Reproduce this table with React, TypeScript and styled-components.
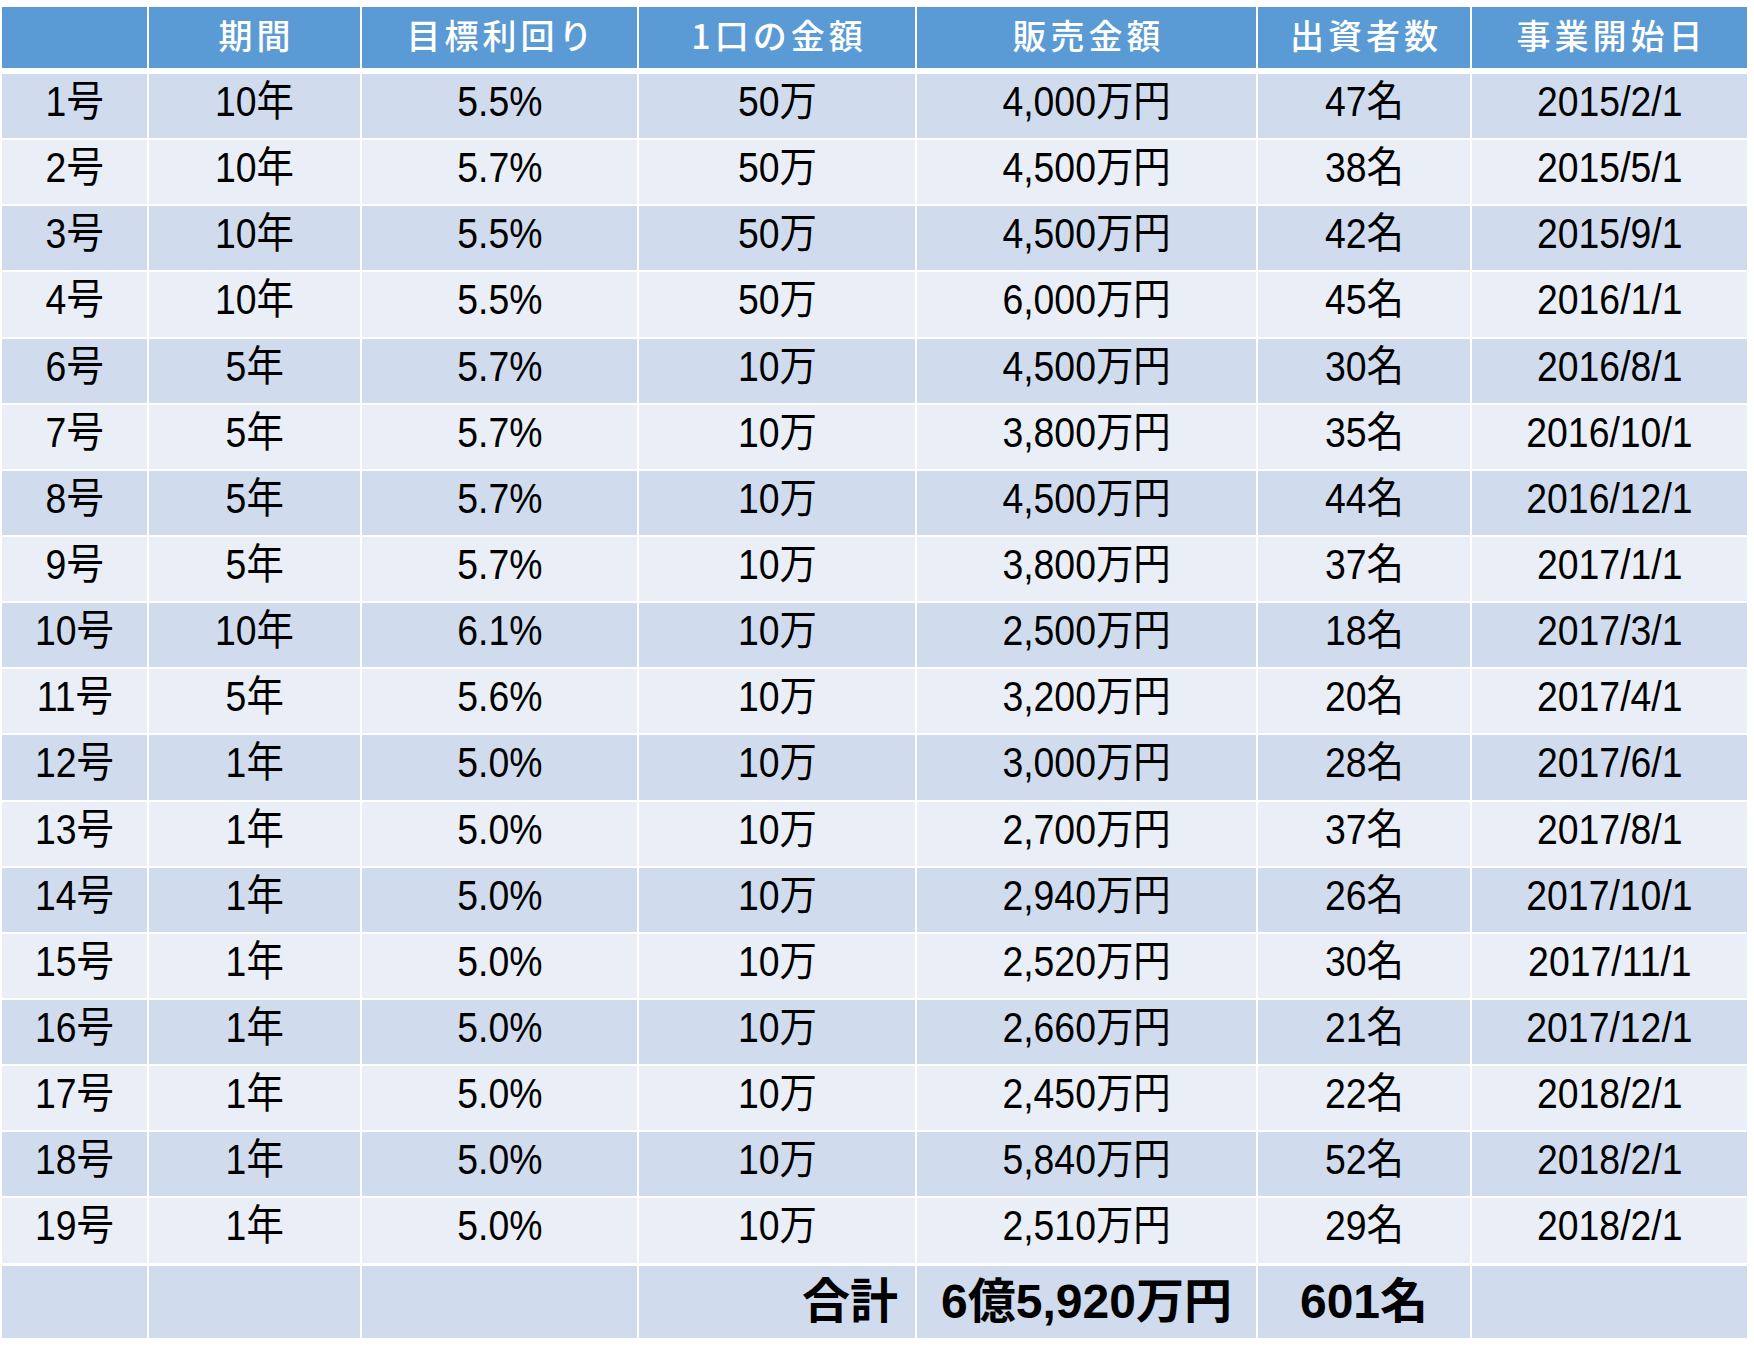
import React from "react";
import styled, { createGlobalStyle } from "styled-components";

const Global = createGlobalStyle`
  html, body { margin: 0; padding: 0; background: #ffffff; }
  body { font-family: "Liberation Sans", "Noto Sans CJK JP", sans-serif; }
`;

const COLS = "145px 211px 275px 276px 339px 212px 275px";

const Page = styled.div`
  width: 1754px;
  height: 1364px;
  padding: 7px 0 0 2px;
  box-sizing: border-box;
  background: #ffffff;
`;

const Table = styled.div`
  display: flex;
  flex-direction: column;
  width: 1745px;
`;

const Row = styled.div<{ $h: number; $mt: number }>`
  display: grid;
  grid-template-columns: ${COLS};
  column-gap: 2px;
  height: ${(p) => p.$h}px;
  margin-top: ${(p) => p.$mt}px;
`;

const HeadCell = styled.div`
  background: #5b9bd5;
  color: #ffffff;
  display: flex;
  align-items: center;
  justify-content: center;
  font-family: "Noto Sans CJK JP", sans-serif;
  font-weight: 500;
  font-size: 34px;
  letter-spacing: 4px;
  padding-left: 4px;
  padding-bottom: 6px;
  box-sizing: border-box;
  white-space: nowrap;
`;

const Cell = styled.div<{ $band: boolean }>`
  background: ${(p) => (p.$band ? "#d0dcee" : "#e9eef7")};
  color: #000000;
  display: flex;
  align-items: center;
  justify-content: center;
  padding-bottom: 8px;
  box-sizing: border-box;
  white-space: nowrap;
`;

const Text = styled.span`
  display: inline-block;
  font-family: "Liberation Sans", "Noto Sans CJK JP", sans-serif;
  font-size: 42px;
  transform: scaleX(0.89);
  line-height: 1;
`;

const TotalCell = styled.div<{ $align?: "right" | "center" }>`
  background: #d0dcee;
  color: #000000;
  display: flex;
  align-items: center;
  justify-content: ${(p) => (p.$align === "right" ? "flex-end" : "center")};
  padding-right: ${(p) => (p.$align === "right" ? "17px" : "0")};
  padding-bottom: 0;
  box-sizing: border-box;
  white-space: nowrap;
`;

const TotalText = styled.span`
  display: inline-block;
  font-family: "Liberation Sans", "Noto Sans CJK JP", sans-serif;
  font-weight: 700;
  font-size: 48px;
  line-height: 1;
`;

const headers = ["", "期間", "目標利回り", "1口の金額", "販売金額", "出資者数", "事業開始日"];

const rows: string[][] = [
  ["1号", "10年", "5.5%", "50万", "4,000万円", "47名", "2015/2/1"],
  ["2号", "10年", "5.7%", "50万", "4,500万円", "38名", "2015/5/1"],
  ["3号", "10年", "5.5%", "50万", "4,500万円", "42名", "2015/9/1"],
  ["4号", "10年", "5.5%", "50万", "6,000万円", "45名", "2016/1/1"],
  ["6号", "5年", "5.7%", "10万", "4,500万円", "30名", "2016/8/1"],
  ["7号", "5年", "5.7%", "10万", "3,800万円", "35名", "2016/10/1"],
  ["8号", "5年", "5.7%", "10万", "4,500万円", "44名", "2016/12/1"],
  ["9号", "5年", "5.7%", "10万", "3,800万円", "37名", "2017/1/1"],
  ["10号", "10年", "6.1%", "10万", "2,500万円", "18名", "2017/3/1"],
  ["11号", "5年", "5.6%", "10万", "3,200万円", "20名", "2017/4/1"],
  ["12号", "1年", "5.0%", "10万", "3,000万円", "28名", "2017/6/1"],
  ["13号", "1年", "5.0%", "10万", "2,700万円", "37名", "2017/8/1"],
  ["14号", "1年", "5.0%", "10万", "2,940万円", "26名", "2017/10/1"],
  ["15号", "1年", "5.0%", "10万", "2,520万円", "30名", "2017/11/1"],
  ["16号", "1年", "5.0%", "10万", "2,660万円", "21名", "2017/12/1"],
  ["17号", "1年", "5.0%", "10万", "2,450万円", "22名", "2018/2/1"],
  ["18号", "1年", "5.0%", "10万", "5,840万円", "52名", "2018/2/1"],
  ["19号", "1年", "5.0%", "10万", "2,510万円", "29名", "2018/2/1"],
];

export default function App() {
  return (
    <Page>
      <Global />
      <Table>
        <Row $h={61} $mt={0}>
          {headers.map((h, i) => (
            <HeadCell key={i}>{h}</HeadCell>
          ))}
        </Row>
        {rows.map((r, ri) => (
          <Row key={ri} $h={64.15} $mt={ri === 0 ? 6 : 2}>
            {r.map((c, ci) => (
              <Cell key={ci} $band={ri % 2 === 0}>
                <Text>{c}</Text>
              </Cell>
            ))}
          </Row>
        ))}
        <Row $h={72} $mt={3}>
          <TotalCell />
          <TotalCell />
          <TotalCell />
          <TotalCell $align="right">
            <TotalText>合計</TotalText>
          </TotalCell>
          <TotalCell>
            <TotalText>6億5,920万円</TotalText>
          </TotalCell>
          <TotalCell>
            <TotalText>601名</TotalText>
          </TotalCell>
          <TotalCell />
        </Row>
      </Table>
    </Page>
  );
}
